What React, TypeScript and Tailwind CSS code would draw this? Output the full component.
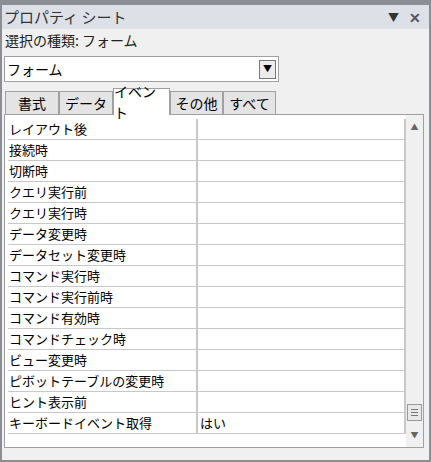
import React from "react";

const rows = ["レイアウト後","接続時","切断時","クエリ実行前","クエリ実行時","データ変更時","データセット変更時","コマンド実行時","コマンド実行前時","コマンド有効時","コマンドチェック時","ビュー変更時","ピボットテーブルの変更時","ヒント表示前","キーボードイベント取得"];

export default function App() {
  const tabs = ["書式","データ","イベント","その他","すべて"];
  const widths = ["w-[54px]","w-[54px]","w-[57px]","w-[53px]","w-[53px]"];
  return (
    <div className="w-[431px] h-[462px] bg-[#8b8f95] p-[2px] pt-[5px] text-[13px] text-black" style={{fontFamily:'"Noto Sans CJK JP", sans-serif'}}>
      <div className="h-full bg-[#f0f0f0] flex flex-col">
        <div className="h-[24px] bg-[#dde1e7] flex items-center pl-[2px] pr-[8px] text-[15px] text-[#333]">
          <span className="flex-1">プロパティ シート</span>
          <span className="text-[11px] mr-[10px]">▼</span>
          <span className="text-[14px] font-bold text-[#555]">✕</span>
        </div>
        <div className="h-[22px] pl-[3px] text-[14px] text-[#222] leading-[22px]">選択の種類: フォーム</div>
        <div className="mt-[5px] ml-[2px] w-[275px] h-[26px] bg-white border border-[#a0a0a0] flex items-center">
          <span className="flex-1 pl-[2px] text-[14px]">フォーム</span>
          <div className="w-[17px] h-[19px] mr-[2px] border border-[#777] bg-[#ececec] flex items-center justify-center text-[9px]">▼</div>
        </div>
        <div className="mt-[6px] flex items-end pl-[3px] h-[26px]">
          {tabs.map((t,i)=> i===2 ? (
            <div key={t} className={`${widths[i]} h-[27px] bg-white border border-[#a0a0a0] border-b-0 -mb-px z-10 flex items-center justify-center text-[14px]`}>{t}</div>
          ) : (
            <div key={t} className={`${widths[i]} h-[23px] bg-[#e4e4e4] border border-[#a0a0a0] border-b-0 flex items-center justify-center text-[14px]`}>{t}</div>
          ))}
        </div>
        <div className="ml-[2px] mr-[5px] h-[334px] bg-white border border-[#a0a0a0] flex pt-[4px] pl-[3px]">
          <div className="w-[398px]">
            {rows.map((r,i)=>(
              <div key={r} className="flex h-[21px] border-b border-[#c8c8c8]">
                <div className="w-[190px] border-r-2 border-[#c8c8c8] pl-[1px] leading-[20px]">{r}</div>
                <div className="flex-1 border-r-2 border-[#c8c8c8] pl-[2px] leading-[20px]">{i===14?"はい":""}</div>
              </div>
            ))}
          </div>
          <div className="flex-1 bg-[#f0f0f0] flex flex-col items-center -mt-[4px] pt-[6px] pb-[6px]">
            <span className="text-[8px] text-[#666]">▲</span>
            <div className="flex-1" />
            <div className="w-[15px] h-[17px] border border-[#999] bg-[#e8e8e8] flex flex-col items-center justify-center gap-[2px]">
              <div className="w-[7px] h-px bg-[#777]"/><div className="w-[7px] h-px bg-[#777]"/><div className="w-[7px] h-px bg-[#777]"/>
            </div>
            <span className="mt-[8px] text-[8px] text-[#666]">▼</span>
          </div>
        </div>
      </div>
    </div>
  );
}
